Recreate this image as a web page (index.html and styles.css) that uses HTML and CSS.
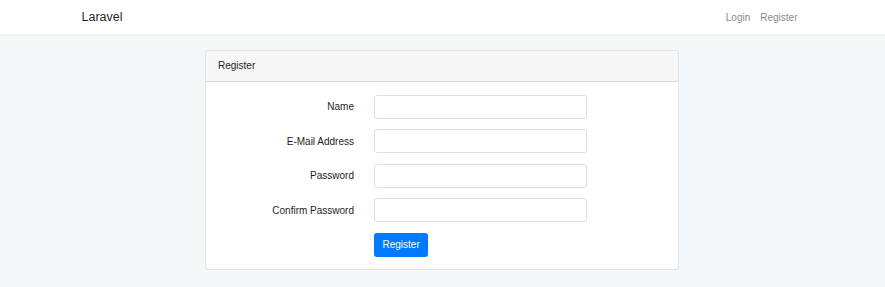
FILE: index.html
```html
<!DOCTYPE html>
<html lang="en">
<head>
    <meta charset="UTF-8">
    <meta name="viewport" content="width=device-width, initial-scale=1.0">
    <title>Laravel</title>
    <link rel="stylesheet" href="styles.css">
</head>
<body>
    <nav class="navbar">
        <div class="navbar-inner">
            <a class="brand" href="#">Laravel</a>
            <div class="nav-links">
                <a href="#">Login</a>
                <a href="#">Register</a>
            </div>
        </div>
    </nav>

    <main class="main">
        <div class="card">
            <div class="card-header">Register</div>
            <form class="card-body">
                <label class="form-label" for="name">Name</label>
                <input class="form-control" id="name" type="text">

                <label class="form-label" for="email">E-Mail Address</label>
                <input class="form-control" id="email" type="email">

                <label class="form-label" for="password">Password</label>
                <input class="form-control" id="password" type="password">

                <label class="form-label" for="password-confirm">Confirm Password</label>
                <input class="form-control" id="password-confirm" type="password">

                <span></span>
                <div><button class="btn-primary" type="submit">Register</button></div>
            </form>
        </div>
    </main>
</body>
</html>
```

FILE: styles.css
```css
body {
    margin: 0;
    background: #f5f8fa;
    font-family: "Liberation Sans", Arial, sans-serif;
    font-size: 10px;
    color: #1b1e21;
}

a {
    text-decoration: none;
}

.navbar {
    background: #fff;
    height: 34px;
    padding-right: 6px;
    box-shadow: 0 1px 3px rgba(0,0,0,0.05);
}

.navbar-inner {
    width: 716px;
    height: 100%;
    margin: 0 auto;
    display: flex;
    align-items: center;
    justify-content: space-between;
}

.brand {
    color: rgba(0,0,0,0.9);
    font-size: 12.5px;
}

.nav-links {
    display: flex;
    gap: 10px;
}

.nav-links a {
    color: rgba(0,0,0,0.5);
    font-size: 10px;
}

.main {
    padding-top: 16px;
    padding-right: 1px;
}

.card {
    width: 472px;
    margin: 0 auto;
    background: #fff;
    border: 1px solid rgba(0,0,0,0.11);
    border-radius: 3px;
}

.card-header {
    height: 30px;
    line-height: 30px;
    padding: 0 12px;
    background: #f7f7f7;
    border-bottom: 1px solid rgba(0,0,0,0.11);
    border-radius: 3px 3px 0 0;
}

.card-body {
    display: grid;
    grid-template-columns: 135px 213px;
    column-gap: 20px;
    row-gap: 10.5px;
    align-items: center;
    padding: 12.5px 13px;
    margin: 0;
}

.form-label {
    text-align: right;
}

.form-control {
    box-sizing: border-box;
    height: 24px;
    width: 213px;
    margin: 0;
    border: 1px solid #dde1e6;
    border-radius: 3px;
    background: #fff;
    font: inherit;
}

.btn-primary {
    display: block;
    height: 24px;
    padding: 0 8.5px;
    border: none;
    border-radius: 3px;
    background: #007bff;
    color: #fff;
    font: inherit;
    font-size: 10px;
}
```
